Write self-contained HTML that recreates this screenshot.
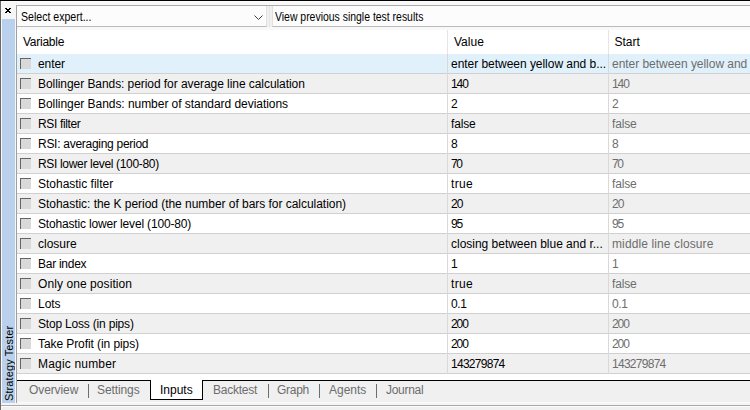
<!DOCTYPE html><html><head><meta charset="utf-8"><style>
*{margin:0;padding:0;box-sizing:border-box}
html,body{width:750px;height:410px;overflow:hidden;background:#f0f0f0;font-family:"Liberation Sans",sans-serif;font-size:12px;color:#000}
.a{position:absolute}
.t{position:absolute;white-space:pre;line-height:14px}
.row{position:absolute;left:17px;width:733px;height:20px;border-bottom:1px solid #d0d0d0}
.cb{position:absolute;left:3px;top:4px;width:11px;height:11px;background:#d9d9d9;border-top:1px solid #646464;border-left:1px solid #646464}
.c1{position:absolute;left:21px;top:3px}
.c2{position:absolute;left:434px;top:3px}
.c3{position:absolute;left:595px;top:3px;color:#6d6d6d}
.sep{position:absolute;top:0;width:1px;height:20px;background:#d9d9d9}
.tab{position:absolute;top:383px;color:#6d6d6d;white-space:pre;line-height:14px}
.bar{position:absolute;top:384px;width:1px;height:14px;background:#6d6d6d}
</style></head><body>
<div class="a" style="left:0;top:0;width:750px;height:1px;background:#000"></div>
<div class="a" style="left:0;top:1px;width:1px;height:409px;background:#6a6a6a"></div>
<div class="a" style="left:1px;top:1px;width:749px;height:1px;background:#fdfdfd"></div>
<div class="a" style="left:1px;top:1px;width:1px;height:409px;background:#f8f8f8"></div>
<div class="a" style="left:2px;top:2px;width:14px;height:401px;background:#f6f6f6"></div>
<svg class="a" style="left:5px;top:8px" width="6" height="5" viewBox="0 0 6 5" shape-rendering="crispEdges"><path d="M0 0h2v1h-2zM4 0h2v1h-2zM1 1h4v1h-4zM2 2h2v1h-2zM1 3h4v1h-4zM0 4h2v1h-2zM4 4h2v1h-2z" fill="#000"/></svg>
<div class="a" style="left:2px;top:19px;width:13px;height:384px;background:#b9d1ec"></div>
<div class="t" style="left:2px;top:401px;transform-origin:0 0;transform:rotate(-90deg);font-size:11px;letter-spacing:0.1px;width:80px">Strategy Tester</div>
<div class="a" style="left:15px;top:19px;width:1px;height:384px;background:#f8f8f8"></div>
<div class="a" style="left:16px;top:5px;width:1px;height:398px;background:#a0a0a0"></div>
<div class="a" style="left:17px;top:2px;width:733px;height:28px;background:#f8f8f8"></div>
<div class="a" style="left:16px;top:5px;width:734px;height:1px;background:#ababab"></div>
<div class="a" style="left:17px;top:6px;width:250px;height:21px;background:#fcfcfc;border-right:1px solid #e0e0e0;border-bottom:1px solid #bababa"></div>
<div class="a" style="left:267px;top:6px;width:5px;height:21px;background:#f0f0f0"></div>
<div class="a" style="left:269px;top:6px;width:1px;height:21px;background:#e6e6e6"></div>
<div class="a" style="left:272px;top:6px;width:478px;height:21px;background:#fcfcfc;border-left:1px solid #e0e0e0;border-bottom:1px solid #bababa"></div>
<div class="t" style="left:21px;top:10px;font-size:12px;transform-origin:0 0;transform:scaleX(0.88)">Select expert...</div>
<svg class="a" style="left:254px;top:15px" width="9" height="5" viewBox="0 0 9 5"><path d="M0.5 0.5L4.5 4.5L8.5 0.5" fill="none" stroke="#404040" stroke-width="1"/></svg>
<div class="t" style="left:275px;top:10px;font-size:12px;transform-origin:0 0;transform:scaleX(0.87)">View previous single test results</div>
<div class="a" style="left:17px;top:30px;width:733px;height:24px;background:#fff"></div>
<div class="t" style="left:23px;top:35px;letter-spacing:-0.25px">Variable</div>
<div class="t" style="left:454px;top:35px">Value</div>
<div class="t" style="left:614.5px;top:35px">Start</div>
<div class="a" style="left:447px;top:30px;width:1px;height:24px;background:#e5e5e5"></div>
<div class="a" style="left:608px;top:30px;width:1px;height:24px;background:#e5e5e5"></div>
<div class="row" style="top:54px;background:#e1f1fc"><div class="cb"></div><div class="t c1" style="letter-spacing:-0.100px">enter</div><div class="t c2" style="letter-spacing:-0.036px">enter between yellow and b...</div><div class="t c3" style="letter-spacing:-0.036px">enter between yellow and b...</div><div class="sep" style="left:430px"></div><div class="sep" style="left:591px"></div></div>
<div class="row" style="top:74px;background:#f0f0f0"><div class="cb"></div><div class="t c1" style="letter-spacing:-0.065px">Bollinger Bands: period for average line calculation</div><div class="t c2" style="letter-spacing:-1.100px">140</div><div class="t c3" style="letter-spacing:-1.100px">140</div><div class="sep" style="left:430px"></div><div class="sep" style="left:591px"></div></div>
<div class="row" style="top:94px;background:#ffffff"><div class="cb"></div><div class="t c1" style="letter-spacing:-0.047px">Bollinger Bands: number of standard deviations</div><div class="t c2" style="">2</div><div class="t c3" style="">2</div><div class="sep" style="left:430px"></div><div class="sep" style="left:591px"></div></div>
<div class="row" style="top:114px;background:#f0f0f0"><div class="cb"></div><div class="t c1" style="letter-spacing:-0.356px">RSI filter</div><div class="t c2" style="letter-spacing:-0.175px">false</div><div class="t c3" style="letter-spacing:-0.175px">false</div><div class="sep" style="left:430px"></div><div class="sep" style="left:591px"></div></div>
<div class="row" style="top:134px;background:#ffffff"><div class="cb"></div><div class="t c1" style="letter-spacing:-0.280px">RSI: averaging period</div><div class="t c2" style="">8</div><div class="t c3" style="">8</div><div class="sep" style="left:430px"></div><div class="sep" style="left:591px"></div></div>
<div class="row" style="top:154px;background:#f0f0f0"><div class="cb"></div><div class="t c1" style="letter-spacing:-0.330px">RSI lower level (100-80)</div><div class="t c2" style="letter-spacing:-1.400px">70</div><div class="t c3" style="letter-spacing:-1.400px">70</div><div class="sep" style="left:430px"></div><div class="sep" style="left:591px"></div></div>
<div class="row" style="top:174px;background:#ffffff"><div class="cb"></div><div class="t c1" style="letter-spacing:-0.013px">Stohastic filter</div><div class="t c2" style="letter-spacing:0.300px">true</div><div class="t c3" style="letter-spacing:-0.175px">false</div><div class="sep" style="left:430px"></div><div class="sep" style="left:591px"></div></div>
<div class="row" style="top:194px;background:#f0f0f0"><div class="cb"></div><div class="t c1" style="letter-spacing:-0.036px">Stohastic: the K period (the number of bars for calculation)</div><div class="t c2" style="letter-spacing:-1.000px">20</div><div class="t c3" style="letter-spacing:-1.000px">20</div><div class="sep" style="left:430px"></div><div class="sep" style="left:591px"></div></div>
<div class="row" style="top:214px;background:#ffffff"><div class="cb"></div><div class="t c1" style="letter-spacing:-0.166px">Stohastic lower level (100-80)</div><div class="t c2" style="letter-spacing:-1.100px">95</div><div class="t c3" style="letter-spacing:-1.100px">95</div><div class="sep" style="left:430px"></div><div class="sep" style="left:591px"></div></div>
<div class="row" style="top:234px;background:#f0f0f0"><div class="cb"></div><div class="t c1" style="letter-spacing:-0.017px">closure</div><div class="t c2" style="letter-spacing:-0.014px">closing between blue and r...</div><div class="t c3" style="letter-spacing:0.111px">middle line closure</div><div class="sep" style="left:430px"></div><div class="sep" style="left:591px"></div></div>
<div class="row" style="top:254px;background:#ffffff"><div class="cb"></div><div class="t c1" style="letter-spacing:-0.262px">Bar index</div><div class="t c2" style="">1</div><div class="t c3" style="">1</div><div class="sep" style="left:430px"></div><div class="sep" style="left:591px"></div></div>
<div class="row" style="top:274px;background:#f0f0f0"><div class="cb"></div><div class="t c1" style="letter-spacing:0.081px">Only one position</div><div class="t c2" style="letter-spacing:0.300px">true</div><div class="t c3" style="letter-spacing:-0.175px">false</div><div class="sep" style="left:430px"></div><div class="sep" style="left:591px"></div></div>
<div class="row" style="top:294px;background:#ffffff"><div class="cb"></div><div class="t c1" style="letter-spacing:-0.033px">Lots</div><div class="t c2" style="letter-spacing:-0.4px">0.1</div><div class="t c3" style="letter-spacing:-0.4px">0.1</div><div class="sep" style="left:430px"></div><div class="sep" style="left:591px"></div></div>
<div class="row" style="top:314px;background:#f0f0f0"><div class="cb"></div><div class="t c1" style="letter-spacing:-0.194px">Stop Loss (in pips)</div><div class="t c2" style="letter-spacing:-1.050px">200</div><div class="t c3" style="letter-spacing:-1.050px">200</div><div class="sep" style="left:430px"></div><div class="sep" style="left:591px"></div></div>
<div class="row" style="top:334px;background:#ffffff"><div class="cb"></div><div class="t c1" style="letter-spacing:-0.080px">Take Profit (in pips)</div><div class="t c2" style="letter-spacing:-1.050px">200</div><div class="t c3" style="letter-spacing:-1.050px">200</div><div class="sep" style="left:430px"></div><div class="sep" style="left:591px"></div></div>
<div class="row" style="top:354px;background:#f0f0f0"><div class="cb"></div><div class="t c1" style="letter-spacing:0.182px">Magic number</div><div class="t c2" style="letter-spacing:-0.725px">143279874</div><div class="t c3" style="letter-spacing:-0.725px">143279874</div><div class="sep" style="left:430px"></div><div class="sep" style="left:591px"></div></div>
<div class="a" style="left:17px;top:374px;width:733px;height:6px;background:#fff"></div>
<div class="a" style="left:17px;top:380px;width:733px;height:1px;background:#000"></div>
<div class="a" style="left:150px;top:380px;width:53px;height:20px;background:#fff;border:1px solid #000;border-top:none"></div>
<div class="tab" style="left:29px;letter-spacing:-0.1px">Overview</div>
<div class="tab" style="left:97px;letter-spacing:-0.1px">Settings</div>
<div class="tab" style="left:213px;letter-spacing:-0.25px">Backtest</div>
<div class="tab" style="left:277px;letter-spacing:-0.28px">Graph</div>
<div class="tab" style="left:329px;letter-spacing:0px">Agents</div>
<div class="tab" style="left:386px;letter-spacing:-0.3px">Journal</div>
<div class="bar" style="left:88px"></div>
<div class="bar" style="left:268px"></div>
<div class="bar" style="left:319px"></div>
<div class="bar" style="left:376px"></div>
<div class="t" style="left:160px;top:383px">Inputs</div>
<div class="a" style="left:17px;top:402px;width:733px;height:1px;background:#fafafa"></div>
<div class="a" style="left:1px;top:403px;width:749px;height:2px;background:#f4f4f4"></div>
<div class="a" style="left:1px;top:405px;width:749px;height:1px;background:#a9a9a9"></div>
<div class="a" style="left:1px;top:406px;width:749px;height:1px;background:#fcfcfc"></div>
</body></html>
